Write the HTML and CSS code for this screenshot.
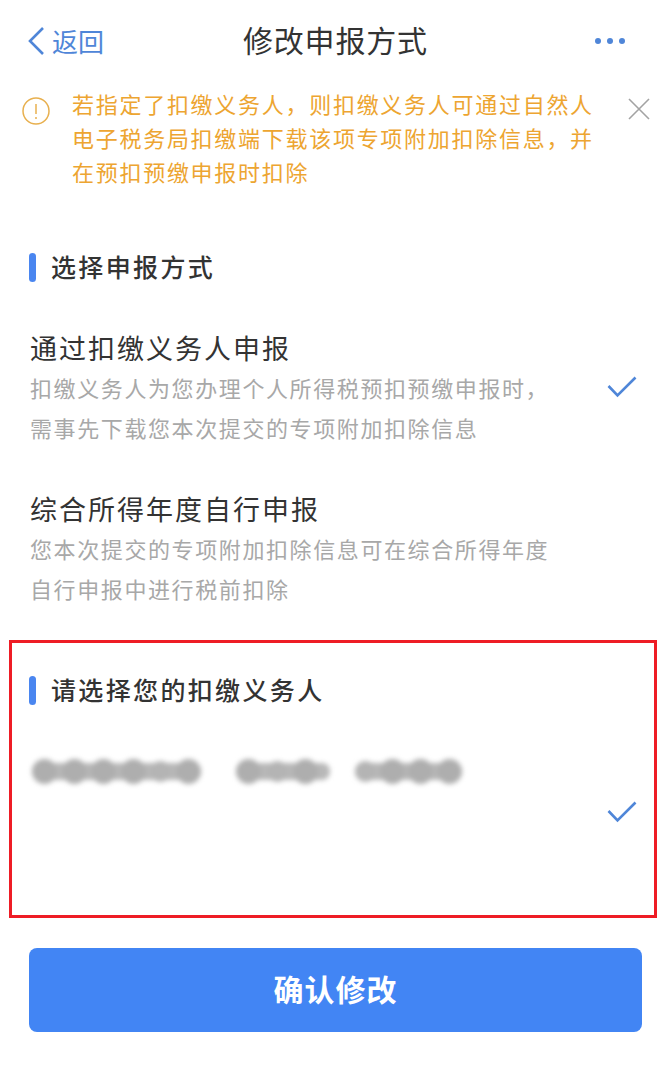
FILE: index.html
```html
<!DOCTYPE html>
<html lang="zh">
<head>
<meta charset="utf-8">
<title>修改申报方式</title>
<link rel="stylesheet" href="styles.css">
</head>
<body>
<div class="page">
  <header class="nav">
    <div class="back">
      <svg class="back-icon" viewBox="0 0 18 30" width="18" height="30"><path d="M16 2 L3 15 L16 28" fill="none" stroke="#4f86d8" stroke-width="2.6"/></svg>
      <span>返回</span>
    </div>
    <h1 class="nav-title">修改申报方式</h1>
    <div class="more"><i></i><i></i><i></i></div>
  </header>

  <section class="notice">
    <svg class="notice-icon" viewBox="0 0 28 28" width="28" height="28"><circle cx="14" cy="14" r="13" fill="none" stroke="#e8b04f" stroke-width="1.5"/><path d="M14 7 V17" stroke="#e8b04f" stroke-width="1.5"/><circle cx="14" cy="21" r="1" fill="#e8b04f"/></svg>
    <p class="notice-text">若指定了扣缴义务人&#xFF0C;则扣缴义务人可通过自然人<br>电子税务局扣缴端下载该项专项附加扣除信息&#xFF0C;并<br>在预扣预缴申报时扣除</p>
    <svg class="notice-close" viewBox="0 0 22 22" width="22" height="22"><path d="M1 1 L21 21 M21 1 L1 21" stroke="#a3a3a3" stroke-width="1.6"/></svg>
  </section>

  <section class="methods">
    <h2 class="section-title">选择申报方式</h2>
    <div class="option">
      <div class="option-body">
        <div class="option-title">通过扣缴义务人申报</div>
        <div class="option-desc">扣缴义务人为您办理个人所得税预扣预缴申报时&#xFF0C;<br>需事先下载您本次提交的专项附加扣除信息</div>
      </div>
      <svg class="check" viewBox="0 0 30 22" width="30" height="22"><path d="M1.5 10 L10.5 19.5 L28.5 1.5" fill="none" stroke="#4f86d8" stroke-width="2.6"/></svg>
    </div>
    <div class="option option-second">
      <div class="option-body">
        <div class="option-title">综合所得年度自行申报</div>
        <div class="option-desc">您本次提交的专项附加扣除信息可在综合所得年度<br>自行申报中进行税前扣除</div>
      </div>
    </div>
  </section>

  <section class="agent-box">
    <h2 class="section-title">请选择您的扣缴义务人</h2>
    <div class="agent-row">
      <div class="redacted">
        <span class="blob blob-a"><i></i><i></i><i></i><i></i><i class="small"></i><i></i></span>
        <span class="blob blob-b"><i></i><i class="small"></i><i></i></span>
        <span class="blob blob-c"><i class="small"></i><i></i><i></i><i></i></span>
      </div>
      <svg class="check agent-check" viewBox="0 0 30 22" width="30" height="22"><path d="M1.5 10 L10.5 19.5 L28.5 1.5" fill="none" stroke="#4f86d8" stroke-width="2.6"/></svg>
    </div>
  </section>

  <div class="actions"><button class="confirm">确认修改</button></div>
</div>
</body>
</html>
```
FILE: styles.css
```css
* { box-sizing: border-box; }
html, body { margin: 0; padding: 0; background: #fff; }
body { font-family: "Noto Sans CJK SC", "Noto Sans", sans-serif; color: #333; }
.page { width: 671px; height: 1069px; overflow: hidden; display: flex; flex-direction: column; }

.nav { height: 82px; display: flex; align-items: center; justify-content: space-between; padding: 0 46px 0 27px; position: relative; }
.back { display: flex; align-items: center; gap: 7px; color: #4f86d8; font-size: 26px; line-height: 34px; }
.nav-title { position: absolute; left: 243px; top: 17px; margin: 0; font-size: 30px; line-height: 44px; font-weight: 400; letter-spacing: .8px; color: #333; }
.more { display: flex; gap: 6px; }
.more i { width: 6px; height: 6px; border-radius: 50%; background: #4f86d8; }

.notice { display: flex; align-items: flex-start; padding: 4px 21px 0 22px; height: 108px; }
.notice-icon { flex: none; margin: 11px 22px 0 0; }
.notice-text { margin: 0; flex: 1; color: #eda531; font-size: 22px; line-height: 34px; letter-spacing: 1.72px; white-space: nowrap; }
.notice-close { flex: none; margin-top: 12px; }

.methods { padding: 0 30px; margin-top: 61px; }
.section-title { margin: 0; padding-left: 21px; position: relative; font-size: 25px; line-height: 30px; font-weight: 500; letter-spacing: 2.35px; color: #333; }
.section-title::before { content: ""; position: absolute; left: -1px; top: 2px; width: 7px; height: 29px; border-radius: 4px; background: #4a86f0; }

.option { display: flex; align-items: center; justify-content: space-between; margin-top: 49px; padding-right: 4px; }
.option-second { margin-top: 44px; }
.option-title { font-size: 27px; line-height: 36px; letter-spacing: 2px; color: #333; }
.option-desc { margin-top: 1px; font-size: 22px; line-height: 40px; letter-spacing: 1.6px; color: #a8a8a8; white-space: nowrap; }
.check { flex: none; margin-top: -3px; }

.agent-box { margin: 32px 0 0 9px; width: 648px; height: 278px; border: 3px solid #ee1c25; padding: 31px 0 0 18px; }
.agent-row { display: flex; align-items: flex-start; justify-content: space-between; padding-right: 17px; }
.redacted { display: flex; margin: 59px 0 0 2px; filter: blur(2.4px); }
.blob { display: flex; align-items: center; justify-content: space-between; height: 17px; border-radius: 8px; background: #b8b8b8; }
.blob i { display: block; width: 25px; height: 25px; border-radius: 50%; background: #aeaeae; }
.blob i.small { width: 21px; height: 21px; background: #b4b4b4; }
.blob-a { width: 169px; }
.blob-b { width: 94px; margin-left: 35px; padding-right: 12px; }
.blob-c { width: 107px; margin-left: 25px; }
.agent-check { margin-top: 97px; }

.actions { margin-top: 30px; padding: 0 29px; }
.confirm { display: block; width: 613px; height: 84px; padding: 0 0 4px; border: 0; border-radius: 8px; background: #4285f4; color: #fff; font-family: inherit; font-size: 30px; font-weight: 700; letter-spacing: 1px; }
```
